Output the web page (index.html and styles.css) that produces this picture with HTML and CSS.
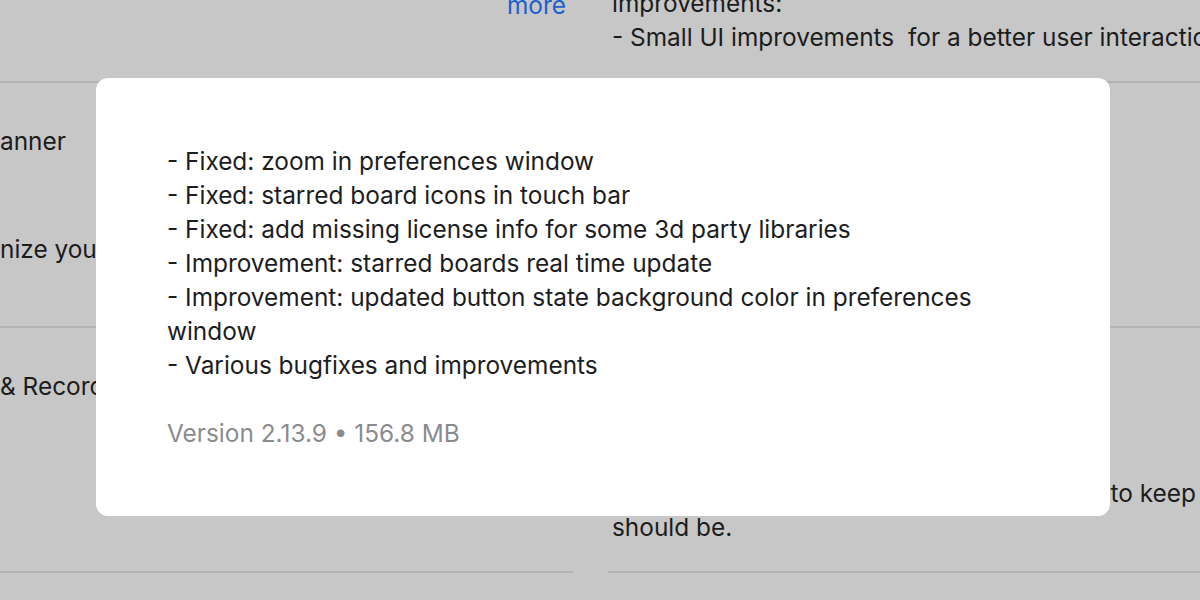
FILE: index.html
```html
<!DOCTYPE html>
<html lang="en">
<head>
<meta charset="utf-8">
<title>Release notes</title>
<link rel="stylesheet" href="styles.css">
</head>
<body>
<div class="page">
  <div class="col col-left">
    <div class="row row-top">
      <a class="more">more</a>
    </div>
    <div class="row row-mid">
      <div class="title">anner</div>
      <div class="desc">nize your boards</div>
    </div>
    <div class="row row-mid">
      <div class="title">&amp; Recorder</div>
    </div>
  </div>
  <div class="col col-right">
    <div class="row row-top">
      <div class="notes">improvements:</div>
      <div class="notes">- Small UI improvements&nbsp; for a better user interaction</div>
    </div>
    <div class="row row-mid"></div>
    <div class="row row-mid">
      <div class="notes notes-end"><span>Capture your screen and record notes to keep</span></div>
      <div class="notes">should be.</div>
    </div>
  </div>
</div>

<div class="modal">
  <div class="changes">
    <p>- Fixed: zoom in preferences window</p>
    <p>- Fixed: starred board icons in touch bar</p>
    <p>- Fixed: add missing license info for some 3d party libraries</p>
    <p>- Improvement: starred boards real time update</p>
    <p>- Improvement: updated button state background color in preferences window</p>
    <p>- Various bugfixes and improvements</p>
  </div>
  <div class="version">Version 2.13.9 • 156.8 MB</div>
</div>
</body>
</html>
```
FILE: styles.css
```css
html, body {
  margin: 0;
  padding: 0;
}
body {
  width: 1200px;
  height: 600px;
  overflow: hidden;
  background: #c7c7c7;
  font-family: Inter, "Noto Sans", sans-serif;
  font-size: 24.4px;
  line-height: 34px;
  color: #1c1c1c;
  position: relative;
}
.page {
  display: flex;
  gap: 35px;
}
.col {
  display: flex;
  flex-direction: column;
  overflow: hidden;
  white-space: nowrap;
}
.col-left {
  width: 573px;
  flex: none;
}
.col-right {
  flex: 1;
}
.row {
  border-bottom: 2px solid #b3b3b3;
  display: flex;
  flex-direction: column;
  box-sizing: border-box;
}
.row-top {
  height: 83px;
  justify-content: flex-end;
}
.row-mid {
  height: 245px;
}
.col-left .row-top {
  padding-bottom: 59px;
  align-items: flex-end;
  padding-right: 7px;
}
.col-right .row-top {
  padding-bottom: 27px;
}
.col-left .row-mid {
  padding-top: 41px;
}
.col-left .row-mid .desc {
  margin-top: 74px;
}
.col-right .row-mid {
  justify-content: flex-end;
  padding-bottom: 27px;
}
.more {
  color: #1c5fcf;
}
.notes {
  white-space: nowrap;
  padding-left: 4px;
}
.notes-end {
  display: flex;
  justify-content: flex-end;
  padding-right: 4px;
  overflow: hidden;
}
.notes-end span {
  flex: none;
}
.modal {
  position: absolute;
  left: 96px;
  top: 78px;
  width: 1014px;
  height: 438px;
  box-sizing: border-box;
  background: #ffffff;
  border-radius: 12px;
  padding: 66px 110px 0 71px;
  color: #1d1d1f;
}
.changes p {
  margin: 0;
}
.version {
  margin-top: 34px;
  color: #8b8b8f;
}
```
